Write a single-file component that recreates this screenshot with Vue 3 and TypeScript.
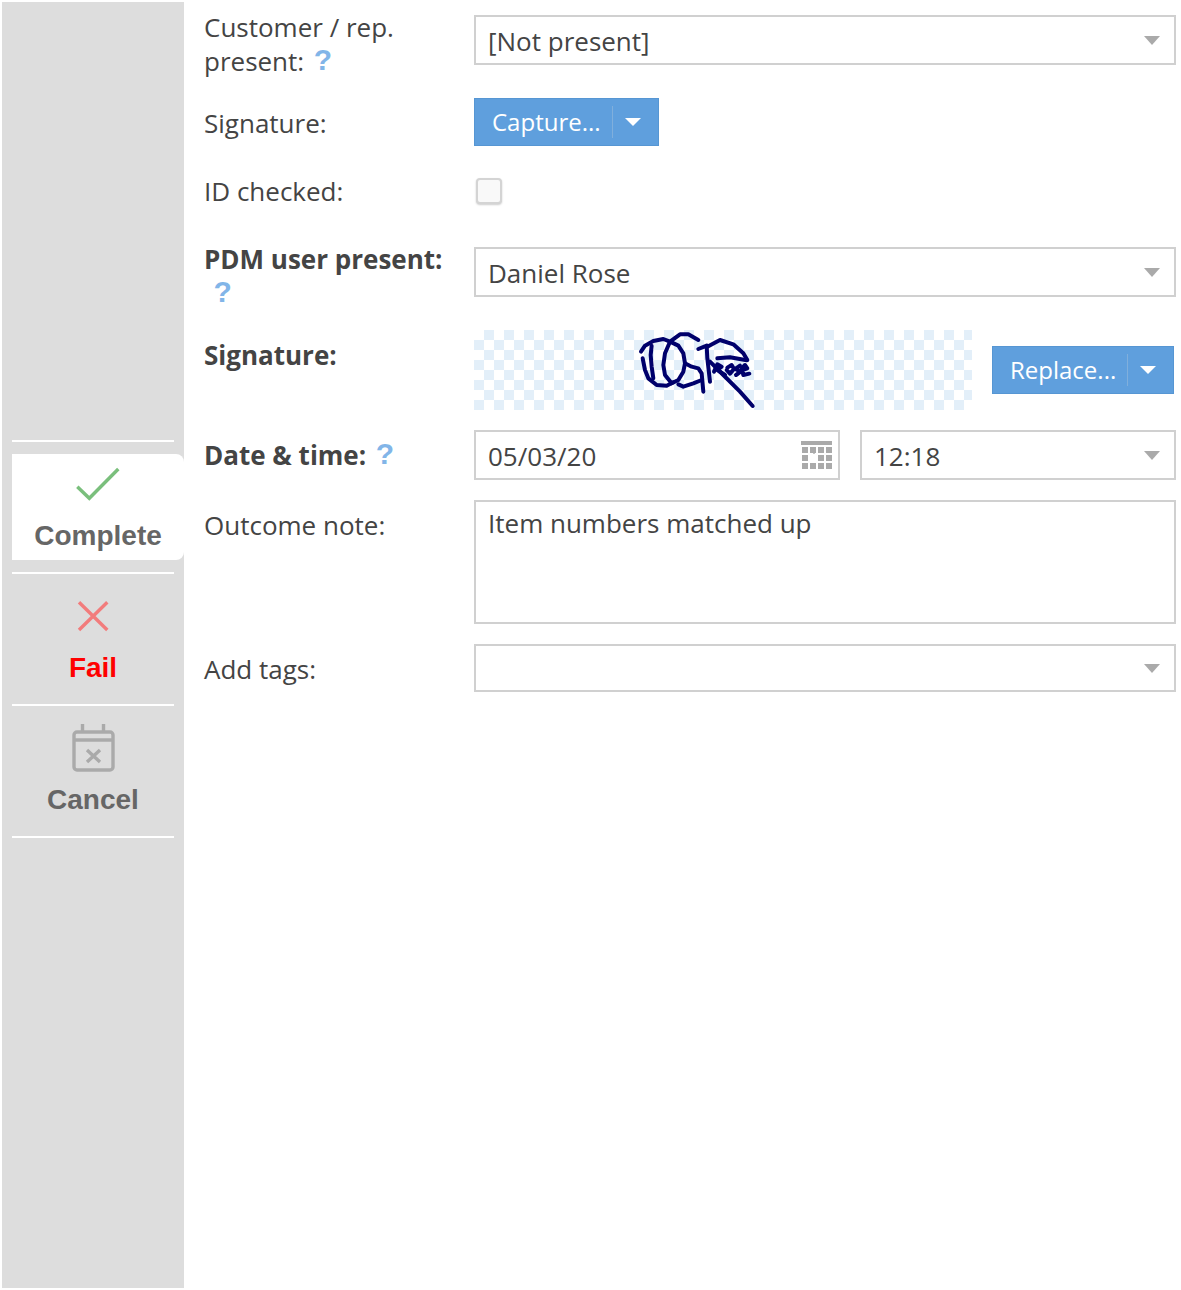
<template>
  <div class="page">
    <aside class="sidebar">
      <div class="rule"></div>
      <div class="action active">
        <svg class="icon" viewBox="0 0 48 48"><path d="M3.3 26.7 15.3 38.3 44.3 9" stroke="#7abf7c" /></svg>
        <span class="action-label">Complete</span>
      </div>
      <div class="rule"></div>
      <div class="action">
        <svg class="icon" viewBox="0 0 48 48"><path d="M10 10.3 38.3 38M38.3 10.3 10 38" stroke="#f27c7c" /></svg>
        <span class="action-label fail">Fail</span>
      </div>
      <div class="rule"></div>
      <div class="action">
        <svg class="icon" viewBox="0 0 48 48" stroke="#aaa">
          <rect x="5" y="8" width="39" height="38" rx="3" />
          <path d="M5 16H44M13.5 0V8M34.5 0V8M18 26 31 38M31 26 18 38" />
        </svg>
        <span class="action-label">Cancel</span>
      </div>
      <div class="rule"></div>
    </aside>

    <main class="form">
      <div class="row row-first">
        <label class="label label-tight">Customer / rep. present:<span class="help">?</span></label>
        <div class="field select"><span>[Not present]</span><i class="caret"></i></div>
      </div>

      <div class="row">
        <label class="label">Signature:</label>
        <div><button class="split-btn">Capture...<i class="sep"></i><i class="btn-caret"></i></button></div>
      </div>

      <div class="row row-check">
        <label class="label label-tight">ID checked:</label>
        <div><div class="checkbox"></div></div>
      </div>

      <div class="row row-user">
        <label class="label label-tight bold">PDM user present:<span class="help">?</span></label>
        <div class="field select"><span>Daniel Rose</span><i class="caret"></i></div>
      </div>

      <div class="row">
        <label class="label bold">Signature:</label>
        <div class="sig-wrap">
          <div class="sig">
            <svg viewBox="-468 15 1494 240" width="498" height="80">
              <g fill="none" stroke="#00006b" stroke-width="12" stroke-linecap="round" stroke-linejoin="round">
                <polyline v-for="(s, i) in strokes" :key="i" :points="s" />
              </g>
            </svg>
          </div>
          <button class="split-btn replace">Replace...<i class="sep"></i><i class="btn-caret"></i></button>
        </div>
      </div>

      <div class="row">
        <label class="label bold">Date &amp; time:<span class="help">?</span></label>
        <div class="date-time">
          <div class="field date">
            <span>05/03/20</span>
            <svg class="cal" width="31" height="29" viewBox="0 0 31 29">
              <rect x="0" y="0" width="31" height="4" fill="#aaa" />
              <rect v-for="c in cells" :key="c.key" :x="c.x" :y="c.y" width="6" height="6" :fill="c.fill" />
              <path d="M11 11H15M13 9V13" stroke="#aaa" stroke-width="1.4" />
            </svg>
          </div>
          <div class="field select time"><span>12:18</span><i class="caret"></i></div>
        </div>
      </div>

      <div class="row">
        <label class="label">Outcome note:</label>
        <div class="field note">Item numbers matched up</div>
      </div>

      <div class="row">
        <label class="label">Add tags:</label>
        <div class="field select tags"><span></span><i class="caret"></i></div>
      </div>
    </main>
  </div>
</template>

<script setup lang="ts">
// signature strokes, traced by hand
const strokes: string[] = [
  "33,80 45,62 70,48 100,42 120,50 145,62 160,85 165,115 160,140 145,165 125,175 105,150 100,120 105,85 120,50 150,28 175,28 205,45",
  "38,100 45,135 55,160 80,180 110,182 130,172",
  "65,62 62,90 65,125 70,160",
  "165,115 185,125 205,130 215,145 220,200",
  "145,178 160,185 190,175 215,165",
  "205,72 230,62 232,100 240,170",
  "232,65 270,45 310,58 340,85 352,105",
  "262,100 300,97 350,106",
  "240,110 280,150 330,200 368,243",
  "252,140 262,118 275,125 262,135 285,150",
  "292,128 305,120 312,132 300,146 290,135",
  "330,122 316,132 332,140 318,150",
  "335,136 352,130 345,120 335,130 340,150 358,146",
];

const cells = [0, 1, 2].flatMap((row) =>
  [0, 1, 2, 3].map((col) => ({
    key: `${row}-${col}`,
    x: 1 + col * 8,
    y: 6 + row * 8,
    fill: row === 1 && col === 1 ? "#fff" : "#aaa",
  }))
);
</script>

<style scoped>
.page {
  display: flex;
  box-sizing: border-box;
  width: 1181px;
  height: 1290px;
  padding: 2px 0 2px 2px;
  font-family: "Open Sans", sans-serif;
  font-size: 26px;
  line-height: 34px;
  color: #444;
  background: #fff;
}

.sidebar {
  flex: none;
  box-sizing: border-box;
  width: 182px;
  padding: 438px 10px 0;
  background: #ddd;
}

.rule {
  height: 2px;
  background: #fff;
}

.action {
  display: flex;
  flex-direction: column;
  align-items: center;
  box-sizing: border-box;
  height: 130px;
  padding-top: 18px;
  font-family: "Liberation Sans", Arial, sans-serif;
}

.action.active {
  height: 106px;
  margin: 12px -10px 12px 0;
  padding-top: 6px;
  background: #fff;
  border-radius: 0 8px 8px 0;
}

.icon {
  display: block;
  width: 48px;
  height: 48px;
  fill: none;
  stroke-width: 3.4;
}

.action-label {
  margin-top: 12px;
  font-size: 28px;
  font-weight: 700;
  line-height: 32px;
  color: #666;
}

.action-label.fail {
  color: #f00;
}

.form {
  flex: 1;
  padding-left: 20px;
}

.row {
  display: grid;
  grid-template-columns: 270px 702px;
  margin-top: 20px;
}

.row-first {
  margin-top: 8px;
}

.row-check {
  margin-top: 28px;
}

.row-user {
  margin-top: 34px;
}

.label {
  display: block;
  width: 250px;
  padding-top: 8px;
}

.label-tight {
  padding-top: 0;
}

.label-tight + .field {
  margin-top: 5px;
}

.bold {
  font-weight: 700;
}

.help {
  display: inline-block;
  margin-left: 9.5px;
  font-family: "Liberation Sans", Arial, sans-serif;
  font-size: 30px;
  font-weight: 700;
  line-height: 32px;
  vertical-align: top;
  color: #82b5e8;
}

.field {
  box-sizing: border-box;
  height: 50px;
  padding: 0 14px 0 12px;
  border: 2px solid #d0d0d0;
  background: #fff;
  line-height: 46px;
}

.select,
.date {
  display: flex;
  align-items: center;
  justify-content: space-between;
  padding-top: 2px;
}

.caret {
  flex: none;
  width: 0;
  height: 0;
  margin-top: -2px;
  border-left: 8.5px solid transparent;
  border-right: 8.5px solid transparent;
  border-top: 9px solid #aaa;
}

.split-btn {
  display: inline-flex;
  align-items: center;
  box-sizing: border-box;
  height: 48px;
  padding: 0 17px;
  border: 1px solid #5696d3;
  background: #5f9fdd;
  color: #fff;
  font: inherit;
  font-size: 24px;
}

.sep {
  width: 1px;
  height: 32px;
  margin: 0 12px 0 11px;
  background: #80afdc;
}

.btn-caret {
  width: 0;
  height: 0;
  border-left: 8px solid transparent;
  border-right: 8px solid transparent;
  border-top: 8px solid #fff;
}

.checkbox {
  box-sizing: border-box;
  width: 26px;
  height: 26px;
  margin: 4px 0 0 2px;
  border: 2px solid #d4d4d4;
  border-radius: 4px;
  background: #f9f9f9;
  box-shadow: 0 1px 2px rgba(0, 0, 0, 0.2);
}

.sig-wrap {
  display: flex;
  gap: 20px;
  align-items: flex-start;
}

.sig {
  flex: none;
  width: 498px;
  height: 80px;
  background: repeating-conic-gradient(#e3eff9 0 25%, #fff 0 50%) 0 0 / 20px 20px;
}

.sig svg {
  display: block;
}

.replace {
  margin-top: 16px;
}

.date-time {
  display: flex;
  gap: 20px;
}

.date {
  width: 366px;
  padding-right: 6px;
}

.cal {
  flex: none;
  margin-top: -2px;
}

.time {
  width: 316px;
}

.note {
  height: 124px;
  line-height: 42px;
}

.tags {
  height: 48px;
}
</style>

<style>
html,
body {
  margin: 0;
  background: #fff;
}
</style>
